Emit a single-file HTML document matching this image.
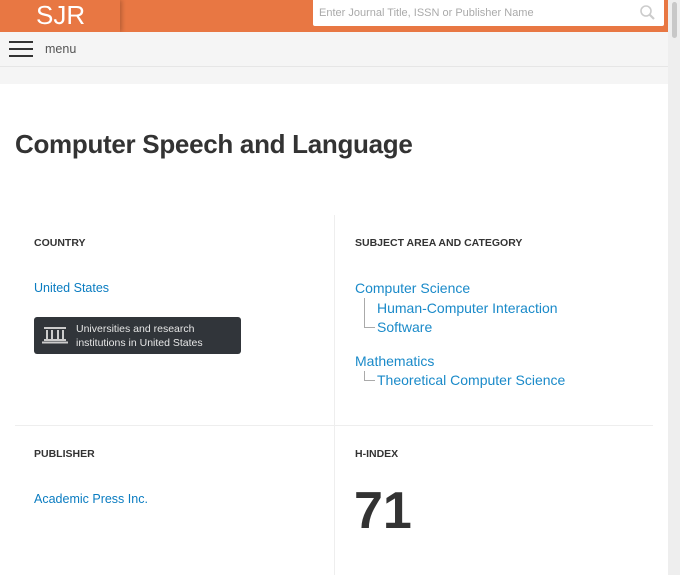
<!DOCTYPE html>
<html><head><style>
*{margin:0;padding:0;box-sizing:border-box}
body{width:680px;height:575px;overflow:hidden;background:#fff;font-family:"Liberation Sans",Arial,sans-serif;position:relative}
.abs{position:absolute}
.lbl{font-size:10.5px;font-weight:bold;color:#333}
.lk{font-size:12.5px;color:#0a7cc1}
.sk{font-size:14px;color:#1a8ac9}
</style></head><body>
<div class="abs" style="left:0;top:0;width:668px;height:32px;background:#e87743"></div>
<div class="abs" style="left:0;top:0;width:120px;height:32px;background:#e87743;box-shadow:2px 0 4px rgba(0,0,0,.2)"></div>
<div class="abs" style="left:36px;top:1px;font-size:26px;color:#fff;line-height:28px">SJR</div>
<div class="abs" style="left:313px;top:0;width:351px;height:26px;background:#fff;border-radius:0 0 2px 2px"></div>
<div class="abs" style="left:319px;top:7px;font-size:11px;color:#aaa">Enter Journal Title, ISSN or Publisher Name</div>
<svg class="abs" style="left:639px;top:4px" width="18" height="18" viewBox="0 0 18 18"><circle cx="7" cy="7" r="5" fill="none" stroke="#ccc" stroke-width="1.6"/><line x1="10.5" y1="10.5" x2="15" y2="15" stroke="#ccc" stroke-width="2.2"/></svg>
<div class="abs" style="left:0;top:32px;width:668px;height:35px;background:#f5f5f5;border-bottom:1px solid #e6e6e6"></div>
<div class="abs" style="left:0;top:67px;width:668px;height:17px;background:#f5f5f5"></div>
<div class="abs" style="left:9px;top:41px;width:24px;height:1.5px;background:#333"></div>
<div class="abs" style="left:9px;top:48px;width:24px;height:1.5px;background:#333"></div>
<div class="abs" style="left:9px;top:55px;width:24px;height:1.5px;background:#333"></div>
<div class="abs" style="left:45px;top:42px;font-size:12.5px;color:#555">menu</div>
<div class="abs" style="left:668px;top:0;width:12px;height:575px;background:#eee"></div>
<div class="abs" style="left:672px;top:2px;width:5px;height:36px;background:#c8c8c8;border-radius:3px"></div>

<div class="abs" style="left:15px;top:129px;font-size:26px;font-weight:bold;color:#333;letter-spacing:-0.3px">Computer Speech and Language</div>

<div class="abs" style="left:334px;top:215px;width:1px;height:360px;background:#eee"></div>
<div class="abs" style="left:15px;top:425px;width:638px;height:1px;background:#eee"></div>

<div class="abs lbl" style="left:34px;top:237px">COUNTRY</div>
<div class="abs lk" style="left:34px;top:281px">United States</div>
<div class="abs" style="left:34px;top:317px;width:207px;height:37px;background:#31353a;border-radius:3px"></div>
<svg class="abs" style="left:42px;top:326px" width="26" height="18" viewBox="0 0 26 18"><rect x="2" y="1" width="22" height="2" fill="#ccc"/><rect x="4" y="4" width="2" height="9" fill="#ccc"/><rect x="9" y="4" width="2" height="9" fill="#ccc"/><rect x="15" y="4" width="2" height="9" fill="#ccc"/><rect x="20" y="4" width="2" height="9" fill="#ccc"/><rect x="2" y="13" width="22" height="2" fill="#ccc"/><rect x="0" y="15.5" width="26" height="2" fill="#ccc"/></svg>
<div class="abs" style="left:76px;top:322px;font-size:10.5px;color:#e6e6e6;line-height:14px">Universities and research<br>institutions in United States</div>

<div class="abs lbl" style="left:355px;top:237px">SUBJECT AREA AND CATEGORY</div>
<div class="abs sk" style="left:355px;top:280px">Computer Science</div>
<div class="abs" style="left:364px;top:298px;width:11px;height:30px;border-left:1px solid #aaa;border-bottom:1px solid #aaa"></div>
<div class="abs sk" style="left:377px;top:300px">Human-Computer Interaction</div>
<div class="abs sk" style="left:377px;top:319px">Software</div>
<div class="abs sk" style="left:355px;top:353px">Mathematics</div>
<div class="abs" style="left:364px;top:371px;width:11px;height:10px;border-left:1px solid #aaa;border-bottom:1px solid #aaa"></div>
<div class="abs sk" style="left:377px;top:372px">Theoretical Computer Science</div>

<div class="abs lbl" style="left:34px;top:448px">PUBLISHER</div>
<div class="abs lk" style="left:34px;top:492px">Academic Press Inc.</div>
<div class="abs lbl" style="left:355px;top:448px">H-INDEX</div>
<div class="abs" style="left:354px;top:481px;font-size:52px;font-weight:bold;color:#333;line-height:60px">71</div>
</body></html>
